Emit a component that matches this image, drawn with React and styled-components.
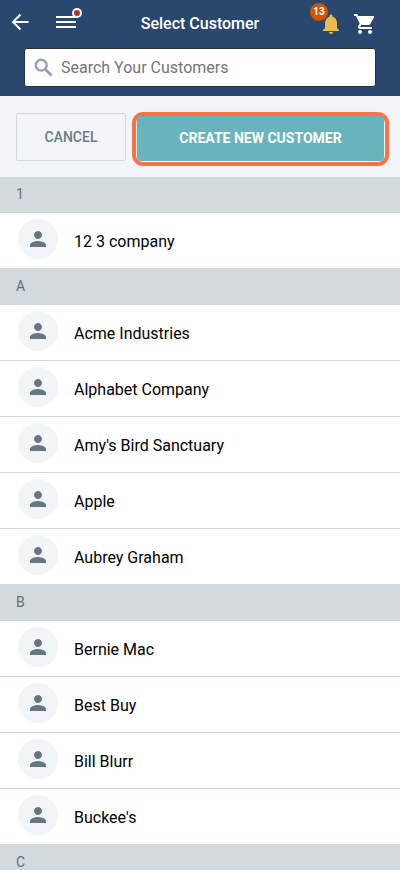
import styled, { createGlobalStyle } from 'styled-components'
import { MdNotifications, MdPerson, MdShoppingCart } from 'react-icons/md'

const groups = [
    { letter: '1', customers: ['12 3 company'] },
    { letter: 'A', customers: ['Acme Industries', 'Alphabet Company', "Amy's Bird Sanctuary", 'Apple', 'Aubrey Graham'] },
    { letter: 'B', customers: ['Bernie Mac', 'Best Buy', 'Bill Blurr', "Buckee's"] },
    { letter: 'C', customers: [] },
]

const BackIcon = () => (
    <svg width="24" height="24" viewBox="0 0 24 24" fill="none" stroke="#fff" strokeWidth="2">
        <path d="M20.500 12H5.500M12.500 4.500L5 12l7.500 7.500" />
    </svg>
)

const MenuIcon = () => (
    <svg width="24" height="24" viewBox="0 0 24 24" fill="#fff">
        <path d="M2 6h20v2H2zM2 11h20v2H2zM2 16h20v2H2z" />
    </svg>
)

const SearchIcon = () => (
    <svg width="24" height="24" viewBox="0 0 24 24" fill="none" stroke="currentColor" strokeWidth="2.400">
        <circle cx="9.200" cy="9.200" r="5.400" />
        <path d="M13.200 13.200L19.600 19.600" strokeWidth="2.800" />
    </svg>
)

const App = () => {
    return (
        <Page>
            <GlobalStyle />
            <Header>
                <Bar>
                    <Side>
                        <IconButton aria-label="Back"><BackIcon /></IconButton>
                        <IconButton aria-label="Menu">
                            <MenuIcon />
                            <Dot />
                        </IconButton>
                    </Side>
                    <Title>Select Customer</Title>
                    <Side $end>
                        <IconButton aria-label="Notifications" $color="#e8bd4a">
                            <MdNotifications size={24} />
                            <Badge>13</Badge>
                        </IconButton>
                        <IconButton aria-label="Cart"><MdShoppingCart size={24} /></IconButton>
                    </Side>
                </Bar>
                <Search>
                    <SearchIcon />
                    <input type="search" aria-label="Search Your Customers" placeholder="Search Your Customers" />
                </Search>
            </Header>
            <Actions>
                <CancelButton>CANCEL</CancelButton>
                <Highlight>
                    <CreateButton>CREATE NEW CUSTOMER</CreateButton>
                </Highlight>
            </Actions>
            <List>
                {groups.map((group) => (
                    <section key={group.letter}>
                        <Letter>{group.letter}</Letter>
                        {group.customers.map((name) => (
                            <Row key={name}>
                                <Avatar><MdPerson size={24} /></Avatar>
                                <Name>{name}</Name>
                            </Row>
                        ))}
                    </section>
                ))}
            </List>
        </Page>
    )
}

const GlobalStyle = createGlobalStyle`
* {
    box-sizing: border-box;
}
body {
    margin: 0;
    background: #fff;
    font-family: Roboto, "Liberation Sans", sans-serif;
}
button, input {
    font-family: inherit;
}
`
const Page = styled.div`
display: flex;
flex-direction: column;
height: 100vh;
`
const Header = styled.header`
flex: none;
padding-bottom: 9px;
background: #2a476f;
`
const Bar = styled.div`
display: grid;
grid-template-columns: 1fr auto 1fr;
height: 48px;
`
const Side = styled.div`
display: flex;
align-items: flex-start;
gap: ${(props) => (props.$end ? '10px' : '22px')};
justify-content: ${(props) => (props.$end ? 'flex-end' : 'flex-start')};
padding: ${(props) => (props.$end ? '12px 23px 0 0' : '10px 0 0 8px')};
`
const IconButton = styled.button`
position: relative;
display: flex;
padding: 0;
border: 0;
background: none;
color: ${(props) => props.$color || '#fff'};
cursor: pointer;
`
const Dot = styled.span`
position: absolute;
top: -2px;
right: -4px;
width: 10px;
height: 10px;
border: 2px solid #fff;
border-radius: 50%;
background: #b5302f;
`
const Badge = styled.span`
position: absolute;
top: -9px;
left: -9px;
width: 18px;
height: 18px;
border-radius: 50%;
background: #d35400;
color: #fff;
font-size: 10px;
font-weight: 700;
line-height: 18px;
text-align: center;
`
const Title = styled.h1`
margin: 0;
color: #fff;
font-size: 16px;
font-weight: 500;
line-height: 48px;
`
const Search = styled.label`
display: flex;
align-items: center;
gap: 5px;
height: 39px;
margin: 0 24px;
padding: 0 7px;
border: 1px solid #263238;
border-radius: 3px;
background: #fff;
color: #90a4ae;
& input {
    flex: 1;
    min-width: 0;
    padding: 0;
    border: 0;
    outline: 0;
    background: none;
    color: #000;
    font-size: 16px;
}
& input::placeholder {
    color: #757575;
}
`
const Actions = styled.div`
display: flex;
flex: none;
align-items: flex-start;
gap: 6px;
padding: 16px 11px 11px 16px;
background: #f1f5f9;
`
const CancelButton = styled.button`
flex: none;
width: 110px;
height: 48px;
margin-top: 1px;
border: 1px solid #d3dadd;
border-radius: 2px;
background: none;
color: #6b7c85;
font-size: 14px;
font-weight: 500;
cursor: pointer;
`
const Highlight = styled.div`
display: flex;
flex: 1;
padding: 0 1px 1px;
border: 4px solid #ff7043;
border-radius: 11px;
background: #f1f5f9;
`
const CreateButton = styled.button`
flex: 1;
height: 45px;
padding: 0 0 2px;
border: 0;
border-radius: 4px;
background: #67b4bc;
color: #fff;
font-size: 14px;
font-weight: 700;
cursor: pointer;
`
const List = styled.main`
flex: 1;
min-height: 0;
overflow-y: auto;
scrollbar-width: none;
`
const Letter = styled.h2`
margin: 0;
padding: 0 16px 2px;
background: #d3dadd;
color: #666e73;
font-size: 14px;
font-weight: 400;
line-height: 34px;
`
const Row = styled.div`
display: flex;
gap: 16px;
height: 56px;
padding: 6px 18px 0;
border-bottom: 1px solid #d3dadd;
`
const Avatar = styled.div`
display: flex;
align-items: center;
justify-content: center;
flex: none;
width: 40px;
height: 40px;
border-radius: 50%;
background: #f1f5f8;
color: #657882;
`
const Name = styled.div`
color: #000;
font-size: 16px;
line-height: 46px;
`
export default App
